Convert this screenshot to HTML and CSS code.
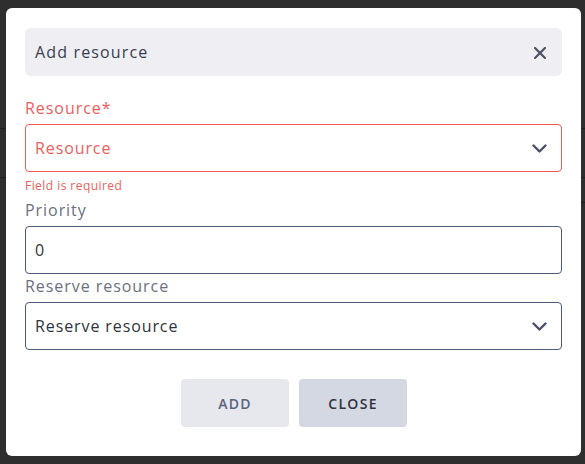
FILE: index.html
```html
<!DOCTYPE html>
<html lang="en">
<head>
<meta charset="utf-8">
<title>Add resource</title>
<link rel="stylesheet" href="styles.css">
</head>
<body>
<div class="backdrop">
  <div class="bg-line l1"></div>
  <div class="bg-line l2"></div>
  <div class="bg-line l3"></div>
</div>
<div class="modal">
  <div class="modal-header">
    <span class="modal-title">Add resource</span>
    <button class="icon-btn" aria-label="Close">
      <svg width="12" height="12" viewBox="0 0 12 12"><path d="M1 1L11 11M11 1L1 11" stroke="#4a5065" stroke-width="2.2" stroke-linecap="round"/></svg>
    </button>
  </div>

  <div class="field">
    <label class="label label-error">Resource*</label>
    <div class="control control-error">
      <span class="value value-error">Resource</span>
      <svg class="chevron" width="15" height="9" viewBox="0 0 15 9"><path d="M1.5 1.5L7.5 7.5L13.5 1.5" fill="none" stroke="#4a5065" stroke-width="2.4" stroke-linecap="round" stroke-linejoin="round"/></svg>
    </div>
    <div class="error-text">Field is required</div>
  </div>

  <div class="field field-priority">
    <label class="label">Priority</label>
    <div class="control">
      <span class="value">0</span>
    </div>
  </div>

  <div class="field">
    <label class="label">Reserve resource</label>
    <div class="control">
      <span class="value">Reserve resource</span>
      <svg class="chevron" width="15" height="9" viewBox="0 0 15 9"><path d="M1.5 1.5L7.5 7.5L13.5 1.5" fill="none" stroke="#4a5065" stroke-width="2.4" stroke-linecap="round" stroke-linejoin="round"/></svg>
    </div>
  </div>

  <div class="actions">
    <button class="btn btn-add">ADD</button>
    <button class="btn btn-close">CLOSE</button>
  </div>
</div>
</body>
</html>
```

FILE: styles.css
```css
* { box-sizing: border-box; }

html, body {
  margin: 0;
  padding: 0;
  width: 585px;
  height: 464px;
  overflow: hidden;
  background: #2e2e2e;
  font-family: "Open Sans", "Noto Sans", sans-serif;
}

body {
  padding: 8px 4px 8px 6px;
  position: relative;
}

.backdrop {
  position: absolute;
  inset: 0;
}

.bg-line {
  position: absolute;
  left: 0;
  right: 0;
  height: 1px;
  background: #1f1f1f;
}
.l1 { top: 128px; }
.l2 { top: 177px; }
.l3 { top: 202px; left: 560px; }

.modal {
  position: relative;
  width: 575px;
  height: 448px;
  background: #ffffff;
  border-radius: 6px;
  padding: 20px 19px 29px 19px;
  display: flex;
  flex-direction: column;
}

.modal-header {
  height: 48px;
  background: #efeff3;
  border-radius: 6px;
  display: flex;
  align-items: center;
  justify-content: space-between;
  padding: 0 14px 0 10px;
  margin-bottom: 20px;
}

.modal-title {
  font-size: 16px;
  color: #393e4f;
  letter-spacing: 1.15px;
}

.icon-btn {
  border: 0;
  background: transparent;
  padding: 0;
  width: 16px;
  height: 16px;
  display: flex;
  align-items: center;
  justify-content: center;
  margin-top: 1px;
}

.field {
  display: flex;
  flex-direction: column;
}

.field-priority {
  margin-top: 4px;
}

.label {
  font-size: 16px;
  line-height: 24px;
  height: 24px;
  color: #6b7080;
  letter-spacing: 0.95px;
  margin-bottom: 4px;
}

.label-error {
  color: #f05c5c;
}

.control {
  height: 48px;
  border: 1px solid #4f5a7a;
  border-radius: 4px;
  display: flex;
  align-items: center;
  justify-content: space-between;
  padding: 0 14px 0 9px;
}

.control-error {
  border-color: #f05c5c;
}

.value {
  font-size: 16px;
  color: #2f3340;
  letter-spacing: 0.9px;
}

.value-error {
  color: #f05c5c;
}

.chevron {
  display: block;
  margin-top: 1px;
}

.error-text {
  font-size: 12px;
  line-height: 16px;
  color: #f05c5c;
  margin-top: 6px;
  letter-spacing: 0.45px;
}

.actions {
  margin-top: 29px;
  display: flex;
  justify-content: center;
  gap: 10px;
}

.btn {
  width: 108px;
  height: 48px;
  border: 0;
  border-radius: 4px;
  font-family: "Open Sans", "Noto Sans", sans-serif;
  font-size: 14px;
  font-weight: 600;
  letter-spacing: 1.3px;
  padding: 0 0 0 1px;
}

.btn-add {
  background: #e7e8ee;
  color: #5a6280;
}

.btn-close {
  background: #d4d8e2;
  color: #2f3340;
}
```
